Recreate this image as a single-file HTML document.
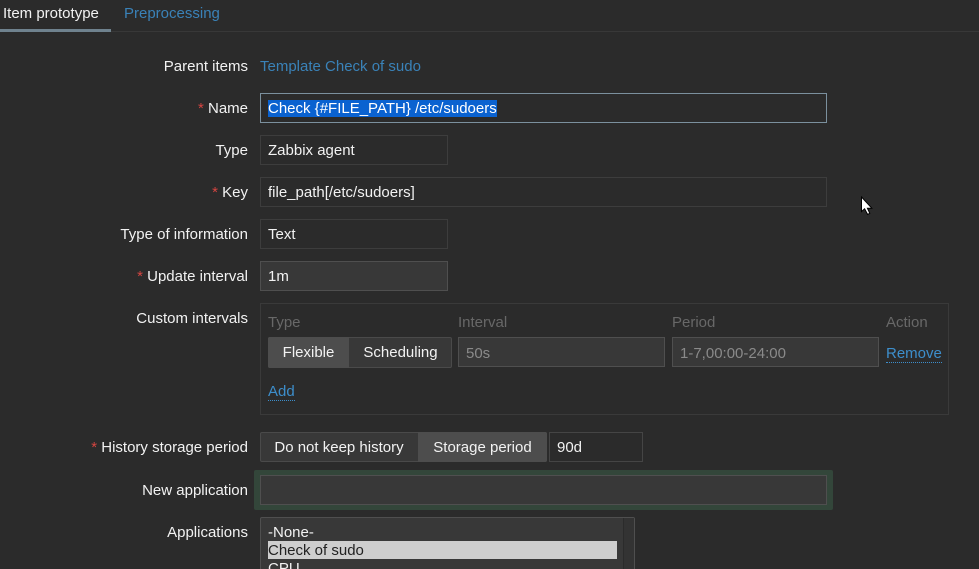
<!DOCTYPE html>
<html><head><meta charset="utf-8"><style>
html,body{margin:0;padding:0;background:#2b2b2b}
#p{position:relative;width:979px;height:569px;overflow:hidden;background:#2b2b2b;font:15px/18px "Liberation Sans",Arial,sans-serif;color:#f2f2f2}
#p div,#p span.a{position:absolute;box-sizing:border-box;white-space:nowrap}
.l{left:0;width:248px;text-align:right}
.l i{font-style:normal;color:#d64541}
.in{border:1px solid #3d3d3d;padding:5px 7px;height:30px;line-height:19px}
.en{background:#383838;border-color:#4f4f4f}
.dis{background:#383838;border-color:#4f4f4f;color:#8a8a8a;padding-top:6px}
.h{color:#686868}
.lnk{color:#3d8ecb}
.btn{text-align:center;line-height:31px}
</style></head><body><div id="p">
<div style="left:0;top:31px;width:979px;height:1px;background:#383838"></div>
<div style="left:0;top:29px;width:111px;height:3px;background:#6f828e"></div>
<div style="left:3px;top:5px">Item prototype</div>
<div class="lnk" style="left:124px;top:5px;color:#3a82b8">Preprocessing</div>

<div class="l" style="top:58px">Parent items</div>
<div style="left:260px;top:58px;color:#3a82b8">Template Check of sudo</div>

<div class="l" style="top:100px"><i>*</i> Name</div>
<div class="in" style="left:260px;top:93px;width:567px;border-color:#7b909e"><span style="background:#0a62d0;color:#fff;display:inline-block;height:17px;line-height:17px">Check {#FILE_PATH} /etc/sudoers</span></div>

<div class="l" style="top:142px">Type</div>
<div class="in" style="left:260px;top:135px;width:188px">Zabbix agent</div>

<div class="l" style="top:184px"><i>*</i> Key</div>
<div class="in" style="left:260px;top:177px;width:567px">file_path[/etc/sudoers]</div>

<div class="l" style="top:226px">Type of information</div>
<div class="in" style="left:260px;top:219px;width:188px">Text</div>

<div class="l" style="top:268px"><i>*</i> Update interval</div>
<div class="in en" style="left:260px;top:261px;width:188px">1m</div>

<div class="l" style="top:310px">Custom intervals</div>
<div style="left:260px;top:303px;width:689px;height:112px;border:1px solid #3a3a3a"></div>
<div class="h" style="left:268px;top:314px">Type</div>
<div class="h" style="left:458px;top:314px">Interval</div>
<div class="h" style="left:672px;top:314px">Period</div>
<div class="h" style="left:886px;top:314px">Action</div>

<div style="left:268px;top:337px;width:184px;height:31px;border:1px solid #4a4a4a;border-radius:2px;background:#383838"></div>
<div class="btn" style="left:268px;top:337px;width:81px;height:31px;background:#4d4d4d;border-radius:2px 0 0 2px">Flexible</div>
<div class="btn" style="left:349px;top:337px;width:103px;height:31px">Scheduling</div>
<div class="in dis" style="left:458px;top:337px;width:207px">50s</div>
<div class="in dis" style="left:672px;top:337px;width:207px">1-7,00:00-24:00</div>
<div style="left:886px;top:345px;height:18px;color:#3d8ecb;border-bottom:1px dotted #3d8ecb">Remove</div>
<div style="left:268px;top:383px;height:18px;color:#3d8ecb;border-bottom:1px dotted #3d8ecb">Add</div>

<div class="l" style="top:439px"><i>*</i> History storage period</div>
<div style="left:260px;top:432px;width:287px;height:30px;border:1px solid #4a4a4a;border-radius:2px;background:#383838"></div>
<div class="btn" style="left:260px;top:432px;width:158px;height:30px">Do not keep history</div>
<div class="btn" style="left:418px;top:432px;width:129px;height:30px;background:#4d4d4d;border-radius:0 2px 2px 0">Storage period</div>
<div class="in" style="left:549px;top:432px;width:94px;border-color:#454545">90d</div>

<div class="l" style="top:482px">New application</div>
<div style="left:254px;top:470px;width:579px;height:40px;background:#33463a;border-radius:2px"></div>
<div class="in en" style="left:260px;top:475px;width:567px;height:30px"></div>

<div class="l" style="top:524px">Applications</div>
<div style="left:260px;top:517px;width:375px;height:60px;background:#383838;border:1px solid #4f4f4f;border-radius:2px 2px 0 0"></div>
<div style="left:623px;top:518px;width:11px;height:60px;background:#333;border-left:1px solid #2b2b2b"></div>
<div style="left:268px;top:524px;width:349px;height:18px">-None-</div>
<div style="left:268px;top:541px;width:349px;height:18px;background:#cecece;color:#222;line-height:20px">Check of sudo</div>
<div style="left:268px;top:560px;width:349px;height:18px">CPU</div>

<svg style="position:absolute;left:860px;top:196px" width="13" height="20" viewBox="0 0 13 20"><path d="M1.5 1V15.5L4.6 12.8L7.6 18.4L9.8 17.3L7.4 12.2H11.8Z" fill="#fff" stroke="#000" stroke-width="1"/></svg>
</div></body></html>
